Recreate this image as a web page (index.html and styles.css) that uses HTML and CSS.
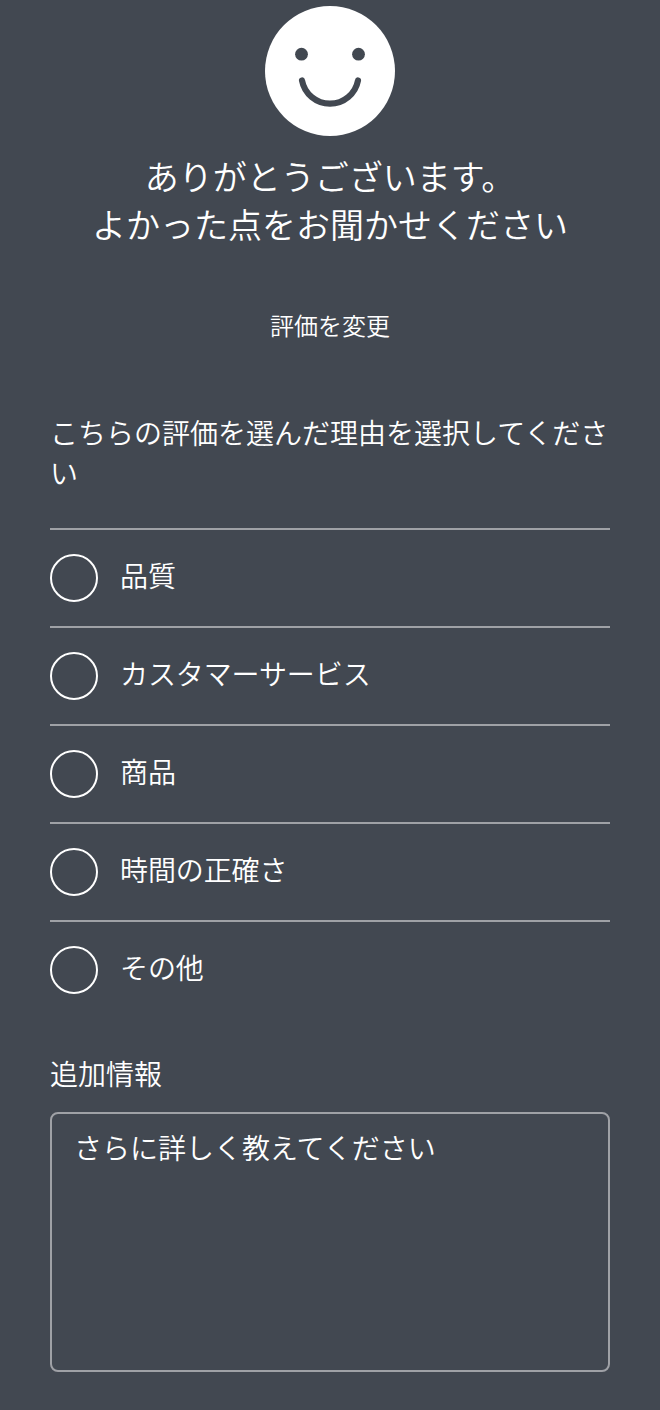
FILE: index.html
```html
<!DOCTYPE html>
<html lang="ja">
<head>
<meta charset="utf-8">
<title>評価</title>
<link rel="stylesheet" href="styles.css">
</head>
<body>
<main class="survey">
  <svg class="face" viewBox="0 0 130 130" aria-hidden="true">
    <circle cx="65" cy="65" r="65" fill="#fff"/>
    <circle cx="36.5" cy="48.2" r="6.4" fill="#424851"/>
    <circle cx="93.5" cy="48.2" r="6.4" fill="#424851"/>
    <path d="M37 74.5a28.5 28.5 0 0 0 56 0" fill="none" stroke="#424851" stroke-width="6.2" stroke-linecap="round"/>
  </svg>
  <h1 class="title"><span class="line">ありがとうございます。</span><span class="line">よかった点をお聞かせください</span></h1>
  <a class="change">評価を変更</a>
  <p class="question">こちらの評価を選んだ理由を選択してください</p>
  <ul class="options">
    <li class="option"><span class="radio"></span><span class="label">品質</span></li>
    <li class="option"><span class="radio"></span><span class="label">カスタマーサービス</span></li>
    <li class="option"><span class="radio"></span><span class="label">商品</span></li>
    <li class="option"><span class="radio"></span><span class="label">時間の正確さ</span></li>
    <li class="option"><span class="radio"></span><span class="label">その他</span></li>
  </ul>
  <label class="more" for="details">追加情報</label>
  <textarea class="details" id="details" placeholder="さらに詳しく教えてください"></textarea>
</main>
</body>
</html>
```
FILE: styles.css
```css
* { box-sizing: border-box; }
body {
  margin: 0;
  background: #424851;
  color: #fff;
  font-family: "Noto Sans CJK JP", sans-serif;
  font-weight: 350;
}
.survey {
  display: flex;
  flex-direction: column;
  height: 1410px;
  padding: 6px 50px 0;
  overflow: hidden;
}
.face { width: 130px; height: 130px; align-self: center; }
.title {
  margin: 16px 0 0;
  font-size: 34px;
  line-height: 48px;
  font-weight: 350;
  text-align: center;
  white-space: nowrap;
}
.line { display: block; }
.change {
  margin-top: 59px;
  font-size: 24px;
  line-height: 36px;
  text-align: center;
}
.question {
  margin: 69px 0 0;
  font-size: 28px;
  line-height: 40px;
  height: 116px;
}
.options { margin: 0; padding: 0; list-style: none; }
.option {
  display: flex;
  gap: 22px;
  height: 98px;
  padding-top: 24px;
  border-top: 2px solid #9fa1a6;
}
.radio {
  width: 48px;
  height: 48px;
  border: 2px solid #fff;
  border-radius: 50%;
}
.label { font-size: 28px; line-height: 42px; letter-spacing: -0.1px; }
.more { margin-top: 35px; font-size: 28px; line-height: 40px; }
.details {
  width: 560px;
  height: 260px;
  margin-top: 19px;
  padding: 13px 22px;
  border: 2px solid #9fa1a6;
  border-radius: 8px;
  background: transparent;
  color: #fff;
  font: inherit;
  font-size: 28px;
  line-height: 40px;
  resize: none;
}
.details::placeholder { color: #fff; }
```
